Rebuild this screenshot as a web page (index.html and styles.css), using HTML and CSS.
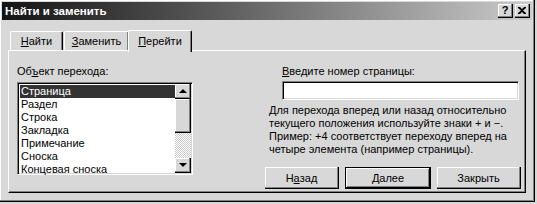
FILE: index.html
```html
<!DOCTYPE html>
<html lang="ru">
  <head>
    <meta charset="UTF-8" />
    <title>Найти и заменить</title>
    <link rel="stylesheet" href="styles.css">
  </head>
  <body>
    <div class="window">
      <div class="titlebar">
        <span class="title">Найти и заменить</span>
        <div class="caption-btns">
          <span class="cbtn">?</span>
          <span class="cbtn">
            <svg width="8" height="7" viewBox="0 0 8 7">
              <path d="M0 0h2l2 2 2-2h2v1l-3 2.5 3 2.5v1h-2l-2-2-2 2h-2v-1l3-2.5-3-2.5z" fill="#000"/>
            </svg>
          </span>
        </div>
      </div>

      <div class="tabs">
        <span class="tab find"><u>Н</u>айти</span>
        <span class="tab replace"><u>З</u>аменить</span>
        <span class="tab goto active"><u>П</u>ерейти</span>
      </div>

      <div class="panel">
        <div class="left">
          <div class="label">Об<u>ъ</u>ект перехода:</div>
          <div class="listbox">
            <ul class="items">
              <li class="selected">Страница</li>
              <li>Раздел</li>
              <li>Строка</li>
              <li>Закладка</li>
              <li>Примечание</li>
              <li>Сноска</li>
              <li>Концевая сноска</li>
            </ul>
            <div class="scrollbar">
              <span class="sbtn"><i class="arrow up"></i></span>
              <span class="thumb"></span>
              <span class="track"></span>
              <span class="sbtn"><i class="arrow down"></i></span>
            </div>
          </div>
        </div>

        <div class="right">
          <div class="label indent"><u>В</u>ведите номер страницы:</div>
          <div class="field indent"></div>
          <p class="hint">Для перехода вперед или назад относительно текущего положения используйте знаки + и &minus;. Пример: +4 соответствует переходу вперед на четыре элемента (например страницы).</p>
          <div class="buttons">
            <span class="btn back">Н<u>а</u>зад</span>
            <span class="btn default"><u>Д</u>алее</span>
            <span class="btn close">Закрыть</span>
          </div>
        </div>
      </div>
    </div>
  </body>
</html>
```

FILE: styles.css
```css
* {
  margin: 0;
  padding: 0;
  box-sizing: border-box;
}

body {
  background: #d8d8d8;
  font: 11px "Liberation Sans", Arial, sans-serif;
  color: #000;
}

u {
  text-decoration: underline;
  text-underline-offset: 1px;
}

.window {
  width: 535px;
  height: 202px;
  padding: 2px;
  background: #d8d8d8;
  border-right: 1px solid #000;
  border-bottom: 1px solid #000;
  box-shadow: inset -1px -1px #808080, inset 1px 1px #fff;
}

.titlebar {
  display: flex;
  align-items: center;
  justify-content: space-between;
  height: 18px;
  padding: 0 2px 0 3px;
  background: linear-gradient(to right, #141414, #5a5a5a 40%, #cbcbcb);
}

.title {
  color: #fff;
  font-weight: bold;
  font-size: 11.5px;
}

.caption-btns {
  display: flex;
  gap: 2px;
}

.cbtn {
  display: flex;
  align-items: center;
  justify-content: center;
  width: 15px;
  height: 14px;
  background: #d8d8d8;
  border-right: 1px solid #000;
  border-bottom: 1px solid #000;
  box-shadow: inset -1px -1px #808080, inset 1px 1px #fff;
  font-weight: bold;
  font-size: 11px;
  line-height: 13px;
}

.tabs {
  display: flex;
  align-items: flex-end;
  height: 30px;
  padding-left: 8px;
}

.tab {
  height: 19px;
  padding-top: 3px;
  margin-right: 1px;
  text-align: center;
  border-top: 1px solid #fff;
  border-left: 1px solid #fff;
  border-right: 1px solid #000;
  border-radius: 2px 2px 0 0;
  box-shadow: inset -1px 0 #808080;
}

.tab.find {
  width: 53px;
}

.tab.replace {
  width: 65px;
}

.tab.active {
  width: 64px;
  height: 22px;
  padding-top: 4px;
  margin: 0 0 -2px -2px;
  background: #d8d8d8;
  position: relative;
}

.panel {
  display: flex;
  width: 518px;
  height: 143px;
  margin-left: 6px;
  padding: 14px 0 0 8px;
  border-top: 1px solid #fff;
  border-left: 1px solid #fff;
  border-right: 1px solid #000;
  border-bottom: 1px solid #000;
  box-shadow: inset -1px -1px #808080;
}

.left {
  width: 176px;
}

.label {
  height: 17px;
}

.listbox {
  display: flex;
  height: 93px;
  border-top: 1px solid #808080;
  border-left: 1px solid #808080;
  border-right: 1px solid #fff;
  border-bottom: 1px solid #fff;
  box-shadow: inset 1px 1px #000, inset -1px -1px #d8d8d8;
  background: #fff;
  padding: 2px;
}

.items {
  flex: 1;
  list-style: none;
}

.items li {
  height: 13px;
  line-height: 13px;
  padding-left: 1px;
}

.items li.selected {
  background: #333;
  color: #fff;
}

.scrollbar {
  display: flex;
  flex-direction: column;
  width: 16px;
  margin: -1px -1px -1px 0;
}

.sbtn,
.thumb {
  display: flex;
  align-items: center;
  justify-content: center;
  background: #d8d8d8;
  border-right: 1px solid #000;
  border-bottom: 1px solid #000;
  box-shadow: inset -1px -1px #808080, inset 1px 1px #fff;
}

.sbtn {
  height: 15px;
}

.thumb {
  height: 34px;
}

.track {
  flex: 1;
  background: repeating-conic-gradient(#fff 0 25%, #c8c8c8 0 50%) 0 0 / 2px 2px;
}

.arrow {
  width: 0;
  height: 0;
  border-left: 4px solid transparent;
  border-right: 4px solid transparent;
}

.arrow.up {
  border-bottom: 4px solid #000;
}

.arrow.down {
  border-top: 4px solid #000;
}

.right {
  display: flex;
  flex-direction: column;
  width: 256px;
  margin-left: 72px;
}

.indent {
  margin-left: 17px;
}

.field {
  width: 237px;
  height: 19px;
  margin-top: -1px;
  background: #fff;
  border-top: 1px solid #808080;
  border-left: 1px solid #808080;
  border-right: 1px solid #fff;
  border-bottom: 1px solid #fff;
  box-shadow: inset 1px 1px #000, inset -1px -1px #d8d8d8;
}

.hint {
  margin: 4px 0 0 4px;
  line-height: 13px;
}

.buttons {
  display: flex;
  gap: 6px;
  margin-top: 11px;
}

.btn {
  display: flex;
  align-items: center;
  justify-content: center;
  height: 22px;
  background: #d8d8d8;
  border-right: 1px solid #000;
  border-bottom: 1px solid #000;
  box-shadow: inset -1px -1px #808080, inset 1px 1px #fff;
}

.btn.back {
  width: 74px;
}

.btn.default {
  width: 86px;
  border: 1px solid #000;
  box-shadow: inset -1px -1px #000, inset 1px 1px #fff, inset -2px -2px #808080;
}

.btn.close {
  width: 84px;
}
```
